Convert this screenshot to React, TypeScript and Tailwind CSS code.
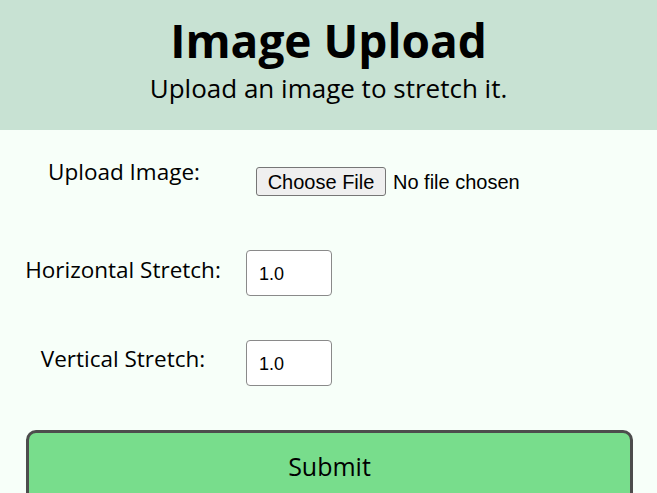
import React from "react";

export default function App() {
  return (
    <div className="min-h-screen bg-[#f7fff9] font-['Open_Sans',sans-serif] text-black">
      <header className="h-[130px] bg-[#c8e2d3] flex flex-col items-center pt-[16px]">
        <h1 className="text-[46px] leading-[48px] font-bold">Image Upload</h1>
        <p className="mt-[8px] text-[26px] leading-[32px]">Upload an image to stretch it.</p>
      </header>
      <form className="pt-[30px] flex flex-col gap-[44px]" onSubmit={(e) => e.preventDefault()}>
        <div className="flex items-center h-[46px]">
          <label className="w-[248px] text-center text-[22.5px] pb-[22px]">Upload Image:</label>
          <div className="ml-[8px] mb-[3px] flex items-center font-['Liberation_Sans',Arial,sans-serif]">
            <button type="button" className="w-[130px] h-[29px] bg-[#efefef] border border-[#767676] rounded-[3px] text-[20px] leading-none text-black">
              Choose File
            </button>
            <span className="ml-[7px] text-[20px]">No file chosen</span>
          </div>
        </div>
        <div className="flex items-center h-[46px]">
          <label className="w-[246px] text-center text-[22.5px] pb-[6px]">Horizontal Stretch:</label>
          <input
            type="text"
            defaultValue="1.0"
            className="w-[86px] h-[46px] bg-white border border-[#8a8a8a] rounded-[4px] pl-[12px] pt-[3px] text-[18px] font-['Liberation_Sans',Arial,sans-serif] outline-none"
          />
        </div>
        <div className="flex items-center h-[46px]">
          <label className="w-[246px] text-center text-[22.5px] pb-[9px]">Vertical Stretch:</label>
          <input
            type="text"
            defaultValue="1.0"
            className="w-[86px] h-[46px] bg-white border border-[#8a8a8a] rounded-[4px] pl-[12px] pt-[3px] text-[18px] font-['Liberation_Sans',Arial,sans-serif] outline-none"
          />
        </div>
        <div className="px-[26px]">
          <button
            type="submit"
            className="w-[607px] h-[74px] bg-[#78dd8c] border-[3px] border-[#4d4d4d] rounded-[10px] text-[25px] text-black"
          >
            Submit
          </button>
        </div>
      </form>
    </div>
  );
}
